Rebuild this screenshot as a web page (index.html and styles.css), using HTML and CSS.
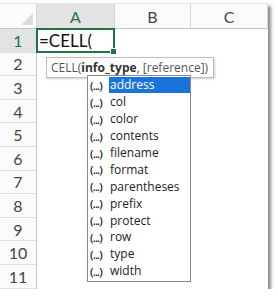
FILE: index.html
```html
<!DOCTYPE html>
<html lang="en">
<head>
    <meta charset="UTF-8">
    <title>CELL function</title>
    <link rel="stylesheet" href="styles.css">
</head>
<body>
    <div class="sheet">
        <div class="grid">
            <div class="corner"><span class="tri"></span></div>
            <div class="colhead active">A</div>
            <div class="colhead">B</div>
            <div class="colhead last">C</div>

            <div class="rowhead active">1</div>
            <div class="cell sel">=CELL(<span class="handle"></span></div>
            <div class="cell"></div>
            <div class="cell"></div>

            <div class="rowhead">2</div><div class="cell"></div><div class="cell"></div><div class="cell"></div>
            <div class="rowhead">3</div><div class="cell"></div><div class="cell"></div><div class="cell"></div>
            <div class="rowhead">4</div><div class="cell"></div><div class="cell"></div><div class="cell"></div>
            <div class="rowhead">5</div><div class="cell"></div><div class="cell"></div><div class="cell"></div>
            <div class="rowhead">6</div><div class="cell"></div><div class="cell"></div><div class="cell"></div>
            <div class="rowhead">7</div><div class="cell"></div><div class="cell"></div><div class="cell"></div>
            <div class="rowhead">8</div><div class="cell"></div><div class="cell"></div><div class="cell"></div>
            <div class="rowhead">9</div><div class="cell"></div><div class="cell"></div><div class="cell"></div>
            <div class="rowhead">10</div><div class="cell"></div><div class="cell"></div><div class="cell"></div>
            <div class="rowhead">11</div><div class="cell"></div><div class="cell"></div><div class="cell"></div>
        </div>

        <div class="tip">CELL(<b>info_type</b>, [reference])</div>

        <ul class="list">
            <li class="on"><span class="ico">(...)</span><span class="name">address</span></li>
            <li><span class="ico">(...)</span><span class="name">col</span></li>
            <li><span class="ico">(...)</span><span class="name">color</span></li>
            <li><span class="ico">(...)</span><span class="name">contents</span></li>
            <li><span class="ico">(...)</span><span class="name">filename</span></li>
            <li><span class="ico">(...)</span><span class="name">format</span></li>
            <li><span class="ico">(...)</span><span class="name">parentheses</span></li>
            <li><span class="ico">(...)</span><span class="name">prefix</span></li>
            <li><span class="ico">(...)</span><span class="name">protect</span></li>
            <li><span class="ico">(...)</span><span class="name">row</span></li>
            <li><span class="ico">(...)</span><span class="name">type</span></li>
            <li><span class="ico">(...)</span><span class="name">width</span></li>
        </ul>
    </div>
</body>
</html>
```

FILE: styles.css
```css
body {
    margin: 0;
    background: #fff;
    font-family: Lato, "Open Sans", sans-serif;
}
.sheet {
    position: relative;
    margin-top: 3px;
    width: 268px;
    box-shadow: 3px 3px 3px rgba(0, 0, 0, 0.45);
}
.grid {
    display: grid;
    grid-template-columns: 37px 78px 76px 77px;
    grid-template-rows: 25px repeat(11, 23.6px);
    border-top: 1px solid #e2e2e2;
    background: #fff;
}
.corner {
    position: relative;
    background: #fbfbfb;
    border-right: 1px solid #d6d6d6;
    border-bottom: 1px solid #c6c6c6;
}
.tri {
    position: absolute;
    right: 3px;
    bottom: 3px;
    width: 0;
    height: 0;
    border-left: 12px solid transparent;
    border-bottom: 12px solid #dcdcdc;
}
.colhead {
    display: flex;
    align-items: center;
    justify-content: center;
    font-size: 16px;
    color: #444;
    background: #fbfbfb;
    border-right: 1px solid #d6d6d6;
    border-bottom: 1px solid #c6c6c6;
}
.colhead.active {
    background: #e3e3e3;
    color: #217346;
}
.rowhead {
    display: flex;
    align-items: center;
    justify-content: center;
    font-size: 16px;
    color: #444;
    background: #fbfbfb;
    border-right: 1px solid #c6c6c6;
    border-bottom: 1px solid #dedede;
}
.rowhead.active {
    background: #e3e3e3;
    color: #217346;
}
.cell {
    position: relative;
}
.cell.sel {
    border: 2px solid #217346;
    margin: -1px 0 0 -1px;
    display: flex;
    align-items: center;
    padding-left: 1px;
    font-size: 17px;
    color: #111;
}
.handle {
    position: absolute;
    right: -4px;
    bottom: -4px;
    width: 5px;
    height: 5px;
    background: #217346;
    border: 1px solid #fff;
}
.tip {
    position: absolute;
    left: 46px;
    top: 54px;
    padding: 1px 5px 1px 4px;
    background: #fff;
    border: 1px solid #bdbdbd;
    box-shadow: 1px 1px 2px rgba(0, 0, 0, 0.2);
    font-family: "Open Sans", sans-serif;
    font-size: 12px;
    color: #555;
}
.tip b {
    color: #333;
}
.list {
    position: absolute;
    left: 87px;
    top: 72px;
    width: 102px;
    margin: 0;
    padding: 1px 0;
    list-style: none;
    background: #fff;
    border: 1px solid #888;
    font-family: "Open Sans", sans-serif;
    font-size: 12px;
    color: #222;
}
.list li {
    display: flex;
    align-items: center;
    height: 16.9px;
}
.ico {
    width: 19px;
    padding-left: 2px;
    font-size: 11px;
    font-weight: 600;
    color: #222;
    letter-spacing: -0.8px;
    white-space: nowrap;
}
.name {
    flex: 1;
    padding-left: 1px;
    line-height: 16px;
}
.list li.on .name {
    background: #1a73d8;
    color: #fff;
}
```
